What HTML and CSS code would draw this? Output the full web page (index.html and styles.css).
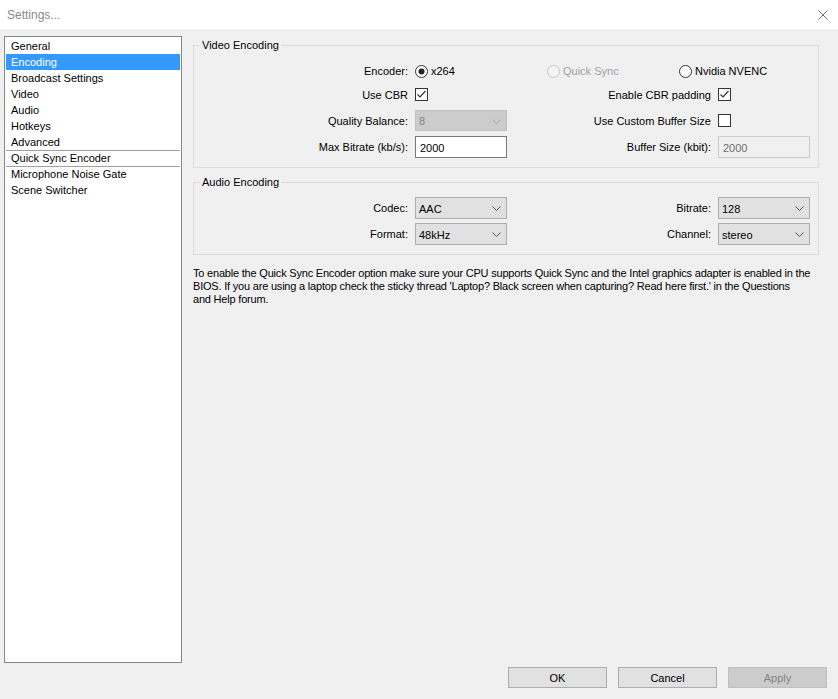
FILE: index.html
```html
<!DOCTYPE html>
<html lang="en">

<head>
    <meta charset="UTF-8">
    <title>Settings...</title>
    <link rel="stylesheet" href="styles.css">
</head>

<body>
    <!-- Title Bar -->
    <div class="title-bar">
        <span class="title">Settings...</span>
        <svg class="close-icon" width="10" height="10" viewBox="0 0 10 10">
            <path d="M0.5 0.5 L9.5 9.5 M9.5 0.5 L0.5 9.5" stroke="#707070" stroke-width="1" fill="none"/>
        </svg>
    </div>

    <div class="main">
        <!-- Category List -->
        <ul class="nav-list">
            <li>General</li>
            <li class="selected">Encoding</li>
            <li>Broadcast Settings</li>
            <li>Video</li>
            <li>Audio</li>
            <li>Hotkeys</li>
            <li>Advanced</li>
            <li class="divider">Quick Sync Encoder</li>
            <li class="divider">Microphone Noise Gate</li>
            <li>Scene Switcher</li>
        </ul>

        <div class="panel">
            <!-- Video Encoding -->
            <fieldset class="group">
                <legend>Video Encoding</legend>
                <div class="form-grid video-grid">
                    <span class="lbl">Encoder:</span>
                    <div class="radio-row">
                        <span class="radio">
                            <svg width="13" height="13" viewBox="0 0 13 13"><circle cx="6.5" cy="6.5" r="6" fill="#fff" stroke="#333"/><circle cx="6.5" cy="6.5" r="3" fill="#222"/></svg>
                            x264
                        </span>
                        <span class="radio disabled">
                            <svg width="13" height="13" viewBox="0 0 13 13"><circle cx="6.5" cy="6.5" r="6" fill="#f4f4f4" stroke="#c4c4c4"/></svg>
                            Quick Sync
                        </span>
                        <span class="radio">
                            <svg width="13" height="13" viewBox="0 0 13 13"><circle cx="6.5" cy="6.5" r="6" fill="#fff" stroke="#333"/></svg>
                            Nvidia NVENC
                        </span>
                    </div>

                    <span class="lbl">Use CBR</span>
                    <span class="check">
                        <svg width="13" height="13" viewBox="0 0 13 13"><rect x="0.5" y="0.5" width="12" height="12" fill="#fff" stroke="#333"/><path d="M2.5 6.5 L5 9 L10.5 3" fill="none" stroke="#333" stroke-width="1.2"/></svg>
                    </span>
                    <span class="lbl">Enable CBR padding</span>
                    <span class="check">
                        <svg width="13" height="13" viewBox="0 0 13 13"><rect x="0.5" y="0.5" width="12" height="12" fill="#fff" stroke="#333"/><path d="M2.5 6.5 L5 9 L10.5 3" fill="none" stroke="#333" stroke-width="1.2"/></svg>
                    </span>

                    <span class="lbl">Quality Balance:</span>
                    <div class="combo combo-disabled">
                        <span>8</span>
                        <svg width="9" height="5" viewBox="0 0 9 5"><path d="M0.5 0.5 L4.5 4.5 L8.5 0.5" fill="none" stroke="#a6a6a6"/></svg>
                    </div>
                    <span class="lbl">Use Custom Buffer Size</span>
                    <span class="check">
                        <svg width="13" height="13" viewBox="0 0 13 13"><rect x="0.5" y="0.5" width="12" height="12" fill="#fff" stroke="#333"/></svg>
                    </span>

                    <span class="lbl">Max Bitrate (kb/s):</span>
                    <input class="textbox" type="text" value="2000">
                    <span class="lbl">Buffer Size (kbit):</span>
                    <input class="textbox" type="text" value="2000" disabled>
                </div>
            </fieldset>

            <!-- Audio Encoding -->
            <fieldset class="group audio-group">
                <legend>Audio Encoding</legend>
                <div class="form-grid audio-grid">
                    <span class="lbl">Codec:</span>
                    <div class="combo">
                        <span>AAC</span>
                        <svg width="9" height="5" viewBox="0 0 9 5"><path d="M0.5 0.5 L4.5 4.5 L8.5 0.5" fill="none" stroke="#555"/></svg>
                    </div>
                    <span class="lbl">Bitrate:</span>
                    <div class="combo">
                        <span>128</span>
                        <svg width="9" height="5" viewBox="0 0 9 5"><path d="M0.5 0.5 L4.5 4.5 L8.5 0.5" fill="none" stroke="#555"/></svg>
                    </div>

                    <span class="lbl">Format:</span>
                    <div class="combo">
                        <span>48kHz</span>
                        <svg width="9" height="5" viewBox="0 0 9 5"><path d="M0.5 0.5 L4.5 4.5 L8.5 0.5" fill="none" stroke="#555"/></svg>
                    </div>
                    <span class="lbl">Channel:</span>
                    <div class="combo">
                        <span>stereo</span>
                        <svg width="9" height="5" viewBox="0 0 9 5"><path d="M0.5 0.5 L4.5 4.5 L8.5 0.5" fill="none" stroke="#555"/></svg>
                    </div>
                </div>
            </fieldset>

            <p class="info">To enable the Quick Sync Encoder option make sure your CPU supports Quick Sync and the Intel graphics adapter is enabled in the BIOS. If you are using a laptop check the sticky thread 'Laptop? Black screen when capturing? Read here first.' in the Questions<br>and Help forum.</p>
        </div>
    </div>

    <!-- Dialog Buttons -->
    <div class="footer">
        <button class="btn">OK</button>
        <button class="btn">Cancel</button>
        <button class="btn btn-disabled">Apply</button>
    </div>
</body>

</html>
```

FILE: styles.css
```css
/* Global Styles */
body {
    margin: 0;
    background: #f0f0f0;
    font-family: "Liberation Sans", Arial, sans-serif;
    font-size: 11px;
    color: #000;
}

/* Title Bar */
.title-bar {
    height: 29px;
    background: #fff;
    display: flex;
    align-items: center;
    justify-content: space-between;
    padding: 0 10px 0 7px;
    box-sizing: border-box;
}

.title {
    font-size: 12px;
    color: #8a8a8a;
}

/* Main Area */
.main {
    display: flex;
    gap: 11px;
    padding: 7px 0 0 4px;
}

.nav-list {
    list-style: none;
    margin: 0;
    padding: 1px;
    width: 178px;
    height: 627px;
    box-sizing: border-box;
    border: 1px solid #828790;
    background: #fff;
}

.nav-list li {
    height: 16px;
    line-height: 16px;
    padding-left: 5px;
    box-sizing: border-box;
    white-space: nowrap;
}

.nav-list li.selected {
    background: #3399ff;
    color: #fff;
}

.nav-list li.divider {
    border-top: 1px solid #a0a0a0;
    line-height: 15px;
}

.panel {
    width: 626px;
    padding-top: 3px;
    display: flex;
    flex-direction: column;
}

/* Group Boxes */
.group {
    margin: 0;
    padding: 6px 8px 9px 0;
    border: 1px solid #dcdcdc;
    min-width: 0;
}

.group legend {
    margin-left: 6px;
    padding: 0 2px;
    line-height: 13px;
}

.audio-group {
    margin-top: 8px;
    padding-top: 8px;
}

.form-grid {
    display: grid;
    grid-template-columns: 216px 92px 1fr 92px;
    column-gap: 5px;
    align-items: center;
}

.video-grid {
    grid-template-rows: 26px 21px 31px 22px;
}

.audio-grid {
    grid-template-rows: 22px 22px;
    row-gap: 4px;
}

.lbl {
    text-align: right;
    white-space: nowrap;
    padding-right: 2px;
}

.radio-row {
    grid-column: 2 / 5;
    display: grid;
    grid-template-columns: repeat(3, 132px);
}

.radio {
    display: flex;
    align-items: center;
    gap: 3px;
    white-space: nowrap;
}

.radio.disabled {
    color: #a0a0a0;
}

.check {
    display: flex;
}

/* Combo Boxes */
.combo {
    height: 22px;
    box-sizing: border-box;
    display: flex;
    align-items: center;
    justify-content: space-between;
    padding: 1px 5px 0 3px;
    border: 1px solid #adadad;
    background: #e1e1e1;
}

.combo-disabled {
    height: 21px;
    background: #cccccc;
    border-color: #bfbfbf;
    color: #838383;
}

/* Text Boxes */
.textbox {
    width: 92px;
    height: 22px;
    box-sizing: border-box;
    margin: 0;
    padding: 1px 4px 0;
    border: 1px solid #7a7a7a;
    background: #fff;
    font: inherit;
    color: #000;
    outline: none;
}

.textbox:disabled {
    background: #f0f0f0;
    border-color: #cccccc;
    color: #6d6d6d;
}

/* Help Text */
.info {
    margin: 12px 0 0;
    line-height: 13px;
    letter-spacing: -0.2px;
}

/* Dialog Buttons */
.footer {
    display: flex;
    justify-content: flex-end;
    gap: 11px;
    padding-right: 11px;
    margin-top: 4px;
}

.btn {
    width: 99px;
    height: 21px;
    padding: 0;
    border: 1px solid #adadad;
    background: #e1e1e1;
    font: inherit;
    color: #000;
}

.btn-disabled {
    background: #cccccc;
    border-color: #bfbfbf;
    color: #838383;
}
```
